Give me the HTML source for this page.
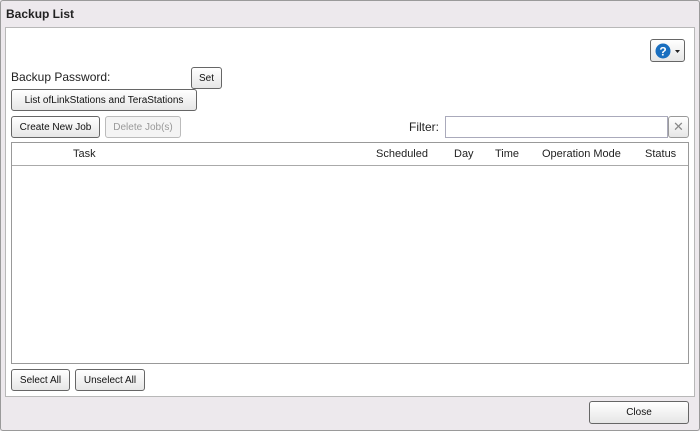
<!DOCTYPE html>
<html><head><style>
*{box-sizing:border-box;margin:0;padding:0}
body{width:700px;height:431px;background:#ede9ed;font-family:"Liberation Sans",sans-serif;position:relative;overflow:hidden}
.win{position:absolute;left:0;top:0;width:700px;height:431px;border:1px solid #9a9a9a;border-radius:3px}
.abs{position:absolute}
.title{left:6px;top:7px;font-size:12px;font-weight:bold;color:#222}
.panel{left:5px;top:27px;width:690px;height:370px;background:#fff;border:1px solid #b8b8b8}
.btn{position:absolute;border:1px solid #666;border-radius:3px;background:linear-gradient(#fff,#e6e6e6);font-size:10px;color:#111;display:flex;align-items:center;justify-content:center;white-space:nowrap}
.dis{border-color:#bbb;color:#999;background:#f4f4f4}
.t{font-size:12px;color:#222}
.th{position:absolute;top:148px;font-size:11px;color:#222}
</style></head><body>
<div class="win"></div>
<div class="abs title">Backup List</div>
<div class="abs panel"></div>
<div class="btn" style="left:650px;top:39px;width:35px;height:23px;justify-content:flex-start;padding-left:4px">
<svg width="16" height="16"><circle cx="8" cy="8" r="7.5" fill="#1a6fc0"/><text x="8" y="12.5" font-size="12" font-weight="bold" fill="#fff" text-anchor="middle" font-family="Liberation Sans">?</text></svg>
<svg width="8" height="6" style="margin-left:3px"><path d="M1 2h5l-2.5 3z" fill="#222"/></svg></div>
<div class="abs t" style="left:11px;top:70px">Backup Password:</div>
<div class="btn" style="left:191px;top:67px;width:31px;height:22px">Set</div>
<div class="btn" style="left:11px;top:89px;width:186px;height:22px">List ofLinkStations and TeraStations</div>
<div class="btn" style="left:11px;top:116px;width:89px;height:22px">Create New Job</div>
<div class="btn dis" style="left:105px;top:116px;width:76px;height:22px">Delete Job(s)</div>
<div class="abs t" style="left:409px;top:120px">Filter:</div>
<div class="abs" style="left:445px;top:116px;width:223px;height:22px;border:1px solid #aab;background:#fff"></div>
<div class="btn" style="left:668px;top:116px;width:21px;height:22px;border-color:#999;color:#888;font-size:13px">✕</div>
<div class="abs" style="left:11px;top:142px;width:678px;height:222px;border:1px solid #999;background:#fff"></div>
<div class="abs" style="left:12px;top:165px;width:676px;height:1px;background:#aaa"></div>
<div class="th" style="left:73px">Task</div>
<div class="th" style="left:376px">Scheduled</div>
<div class="th" style="left:454px">Day</div>
<div class="th" style="left:495px">Time</div>
<div class="th" style="left:542px">Operation Mode</div>
<div class="th" style="left:645px">Status</div>
<div class="btn" style="left:11px;top:369px;width:59px;height:22px">Select All</div>
<div class="btn" style="left:75px;top:369px;width:70px;height:22px">Unselect All</div>
<div class="btn" style="left:589px;top:401px;width:100px;height:23px">Close</div>
</body></html>
